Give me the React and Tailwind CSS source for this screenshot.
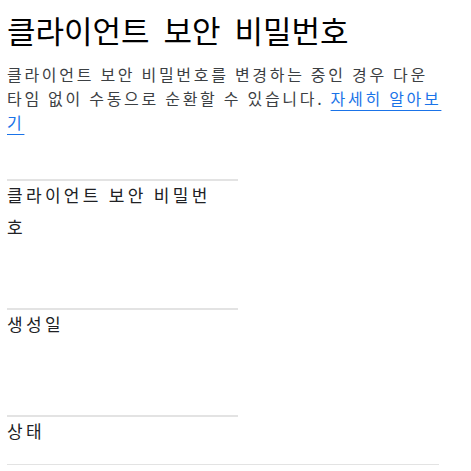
export default function App() {
  const rows = [
    { label: "클라이언트 보안 비밀번호", h: "h-[129px]" },
    { label: "생성일", h: "h-[107px]" },
    { label: "상태", h: "h-[49px]" },
  ];
  return (
    <div className="min-h-screen bg-white pl-[7px] pt-[10px] text-[#202124]" style={{ fontFamily: '"Noto Sans CJK KR", "Noto Sans", sans-serif' }}>
      <div className="w-[432px]">
        <h1 className="text-[31px] leading-[40px] font-normal [word-spacing:7px] text-black">클라이언트 보안 비밀번호</h1>
        <p className="mt-[12px] w-[437px] text-[16px] leading-[24px] tracking-[2.7px] text-[#3c4043]">
          클라이언트 보안 비밀번호를 변경하는 중인 경우 다운타임 없이 수동으로 순환할 수 있습니다.{" "}
          <a href="#" className="text-[#1a73e8] underline underline-offset-[5px]">자세히 알아보기</a>
        </p>
        <div className="mt-[45px] border-b border-[#e3e3e3]">
          {rows.map((r) => (
            <div key={r.label} className={`flex ${r.h}`}>
              <div className="w-[231px] border-t-2 border-[#e3e3e3] pr-[10px] text-[17px] leading-[32px] tracking-[3.3px] text-[#202124]">
                <div className="-mt-[2px]">{r.label}</div>
              </div>
              <div className="flex-1" />
            </div>
          ))}
        </div>
      </div>
    </div>
  );
}
